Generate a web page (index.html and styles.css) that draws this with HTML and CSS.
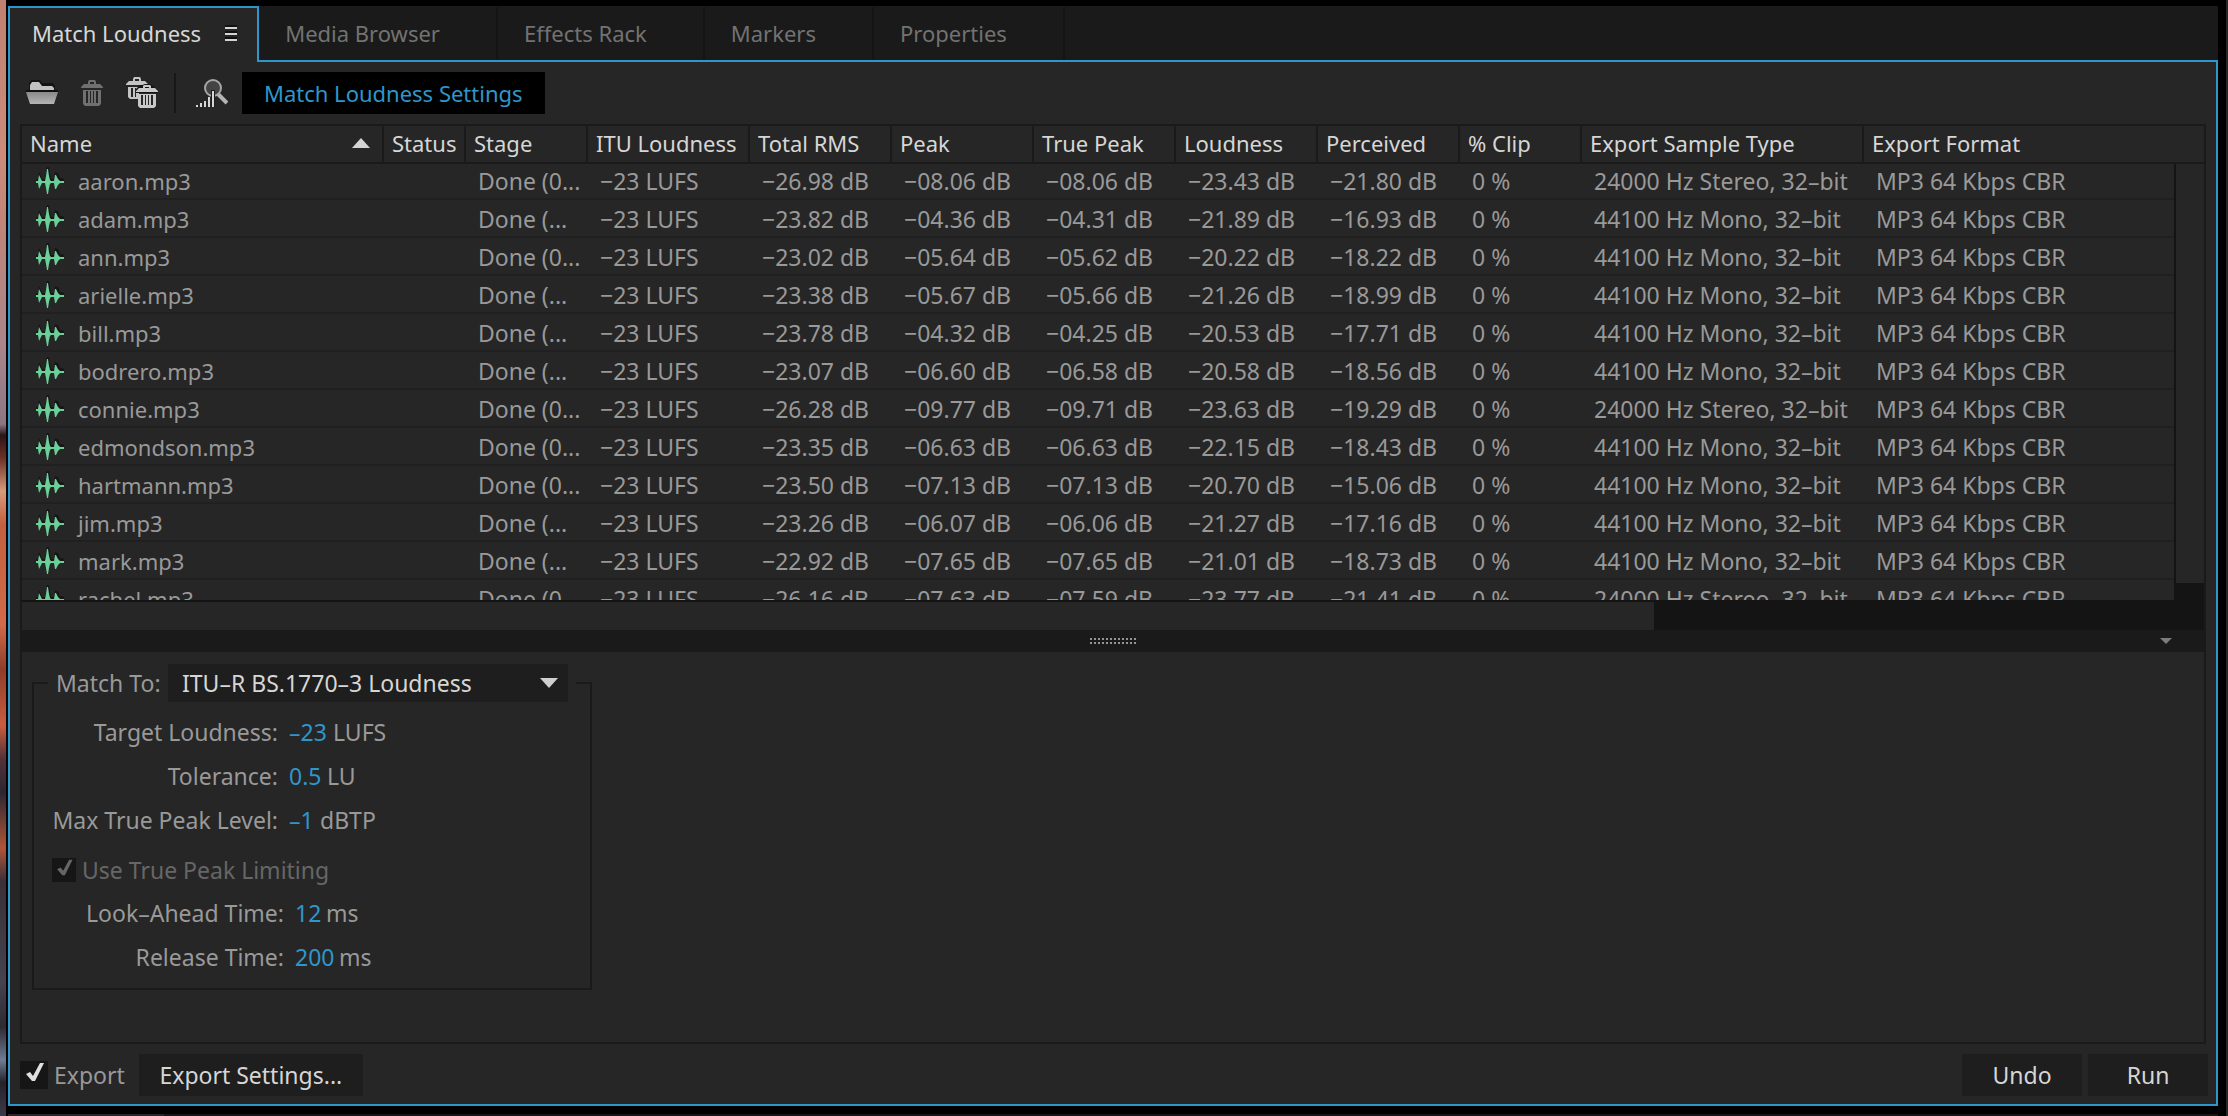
FILE: index.html
```html
<!DOCTYPE html>
<html lang="en">
<head>
<meta charset="utf-8">
<title>Match Loudness</title>
<link rel="stylesheet" href="styles.css">
</head>
<body>
<svg class="defs" width="0" height="0" aria-hidden="true">
  <defs>
    <linearGradient id="metal" x1="0" y1="0" x2="0" y2="1"><stop offset="0" stop-color="#8a8a8a"/><stop offset="1" stop-color="#b4b4b4"/></linearGradient>
    <symbol id="wave" viewBox="0 0 28 28">
      <path fill="#161616" d="M0 12h2l1-7 2 4 1 3h3l1-5 1-7 2 0 1 7 1 5h3l1-7 3 1 2 5 5 1v2H0z"/>
      <path fill="#6bcf98" d="M0 14h2l1-6 2 4 1 2h3l1-5 1-7h1l1 7 1 4 1 1h3l1-6h1l2 4 2 2h4v2h-4l-2 2-2 4h-1l-1-6h-3l-1 1-1 4-1 6h-1l-1-6-1-5H6l-1 2-2 4-1-6H0z"/>
    </symbol>
    <symbol id="bin" viewBox="0 0 22 26">
      <path fill="currentColor" fill-rule="evenodd" d="M7 4V2l1-2h6l1 2v2h4l3 3v1H0V7l3-3zM9 4h4V2H9z"/>
      <path fill="currentColor" fill-rule="evenodd" d="M2 10h18v14l-2 2H4l-2-2zM5 11v12h2V11zM9 11v12h1V11zM12 11v12h1V11zM15 11v12h2V11z"/>
    </symbol>
    <symbol id="tick" viewBox="0 0 28 28"><path fill="currentColor" d="M6 13l4-2 3 4 7-13h4l-9 18h-3z"/></symbol>
  </defs>
</svg>
<div class="wallpaper"></div>
<div class="window">
  <main class="panel">
    <nav class="tabs" aria-label="Panels">
      <button class="tab active" type="button">Match Loudness
        <svg width="12" height="16" viewBox="0 0 12 16"><path fill="#111" d="M0 0h12v2H0zM0 6h12v2H0zM0 12h12v2H0z"/><path fill="#d4d4d4" d="M0 2h12v2H0zM0 8h12v2H0zM0 14h12v2H0z"/></svg>
      </button>
      <button class="tab" type="button">Media Browser</button>
      <button class="tab" type="button">Effects Rack</button>
      <button class="tab" type="button">Markers</button>
      <button class="tab" type="button">Properties</button>
    </nav>
    <div class="content">
      <div class="toolbar">
        <button class="icon-button" type="button" aria-label="Open files">
          <svg width="32" height="26" viewBox="0 0 32 26"><path fill="#141414" d="M3 3l2-3h9l2 3h11l2 3v5H3z"/><path fill="#c2c2c2" d="M4 10V5l2-3h7l3 4h10l2 2v2z"/><path fill="#111" d="M0 10h32v2H0z"/><path fill="url(#metal)" d="M0 12h32l-4 12H4z"/></svg>
        </button>
        <button class="icon-button dim" type="button" aria-label="Remove file" disabled>
          <svg width="22" height="26"><use href="#bin"/></svg>
        </button>
        <button class="icon-button" type="button" aria-label="Remove all files">
          <svg width="32" height="32" viewBox="0 0 32 32"><path fill="#c4c4c4" fill-rule="evenodd" d="M7 4V2l1-2h6l1 2v2h4l3 3-6 1H0V7l3-3zM9 4h4V2H9zM2 10h11v12H4l-2-2zM5 11v9h2v-9zM9 11v9h1v-9z"/><path fill="#141414" d="M10 12l4-4h3l2-1h5l3 2 5 4v3H10z"/><g fill="#c8c8c8" fill-rule="evenodd"><path d="M17 11V9l1-1h6l1 1v2h4l3 3v1H10v-1l3-3zM19 11h4v-1h-4z"/><path d="M12 17h18v12l-2 2H14l-2-2zM15 18v10h2V18zM19 18v10h1V18zM22 18v10h1V18zM25 18v10h2V18z"/></g></svg>
        </button>
        <span class="divider"></span>
        <button class="icon-button scan" type="button" aria-label="Scan">
          <svg width="32" height="32" viewBox="0 0 32 32"><path d="M22 17l9 9" stroke="#b4b4b4" stroke-width="4"/><circle cx="17" cy="11" r="8" fill="#444" stroke="#a6a6a6" stroke-width="2"/><path stroke="#1b1b1b" stroke-width="4" d="M17 13v17"/><path fill="#d6d6d6" d="M0 28h2v2H0zM4 26h2v4H4zM8 24h2v6H8zM12 20h2v10h-2zM16 14h2v16h-2z"/></svg>
        </button>
        <button class="settings-toggle" type="button" aria-pressed="true">Match Loudness Settings</button>
      </div>

      <div class="frame">
        <div class="list">
          <table>
            <colgroup><col class="c-name"><col class="c-status"><col class="c-stage"><col class="c-itu"><col class="c-level"><col class="c-level"><col class="c-level"><col class="c-level"><col class="c-level"><col class="c-stage"><col class="c-sample"><col></colgroup>
            <thead>
              <tr><th><span class="sorted">Name <svg width="18" height="10" viewBox="0 0 18 10"><path fill="#d4d4d4" d="M9 0l9 10H0z"/></svg></span></th><th>Status</th><th>Stage</th><th>ITU Loudness</th><th>Total RMS</th><th>Peak</th><th>True Peak</th><th>Loudness</th><th>Perceived</th><th>% Clip</th><th>Export Sample Type</th><th>Export Format</th></tr>
            </thead>
            <tbody>
              <tr><td><span class="file"><svg width="28" height="28"><use href="#wave"/></svg>aaron.mp3</span></td><td></td><td>Done (0...</td><td>−23 LUFS</td><td>−26.98 dB</td><td>−08.06 dB</td><td>−08.06 dB</td><td>−23.43 dB</td><td>−21.80 dB</td><td>0 %</td><td>24000 Hz Stereo, 32–bit</td><td>MP3 64 Kbps CBR</td></tr>
              <tr><td><span class="file"><svg width="28" height="28"><use href="#wave"/></svg>adam.mp3</span></td><td></td><td>Done (...</td><td>−23 LUFS</td><td>−23.82 dB</td><td>−04.36 dB</td><td>−04.31 dB</td><td>−21.89 dB</td><td>−16.93 dB</td><td>0 %</td><td>44100 Hz Mono, 32–bit</td><td>MP3 64 Kbps CBR</td></tr>
              <tr><td><span class="file"><svg width="28" height="28"><use href="#wave"/></svg>ann.mp3</span></td><td></td><td>Done (0...</td><td>−23 LUFS</td><td>−23.02 dB</td><td>−05.64 dB</td><td>−05.62 dB</td><td>−20.22 dB</td><td>−18.22 dB</td><td>0 %</td><td>44100 Hz Mono, 32–bit</td><td>MP3 64 Kbps CBR</td></tr>
              <tr><td><span class="file"><svg width="28" height="28"><use href="#wave"/></svg>arielle.mp3</span></td><td></td><td>Done (...</td><td>−23 LUFS</td><td>−23.38 dB</td><td>−05.67 dB</td><td>−05.66 dB</td><td>−21.26 dB</td><td>−18.99 dB</td><td>0 %</td><td>44100 Hz Mono, 32–bit</td><td>MP3 64 Kbps CBR</td></tr>
              <tr><td><span class="file"><svg width="28" height="28"><use href="#wave"/></svg>bill.mp3</span></td><td></td><td>Done (...</td><td>−23 LUFS</td><td>−23.78 dB</td><td>−04.32 dB</td><td>−04.25 dB</td><td>−20.53 dB</td><td>−17.71 dB</td><td>0 %</td><td>44100 Hz Mono, 32–bit</td><td>MP3 64 Kbps CBR</td></tr>
              <tr><td><span class="file"><svg width="28" height="28"><use href="#wave"/></svg>bodrero.mp3</span></td><td></td><td>Done (...</td><td>−23 LUFS</td><td>−23.07 dB</td><td>−06.60 dB</td><td>−06.58 dB</td><td>−20.58 dB</td><td>−18.56 dB</td><td>0 %</td><td>44100 Hz Mono, 32–bit</td><td>MP3 64 Kbps CBR</td></tr>
              <tr><td><span class="file"><svg width="28" height="28"><use href="#wave"/></svg>connie.mp3</span></td><td></td><td>Done (0...</td><td>−23 LUFS</td><td>−26.28 dB</td><td>−09.77 dB</td><td>−09.71 dB</td><td>−23.63 dB</td><td>−19.29 dB</td><td>0 %</td><td>24000 Hz Stereo, 32–bit</td><td>MP3 64 Kbps CBR</td></tr>
              <tr><td><span class="file"><svg width="28" height="28"><use href="#wave"/></svg>edmondson.mp3</span></td><td></td><td>Done (0...</td><td>−23 LUFS</td><td>−23.35 dB</td><td>−06.63 dB</td><td>−06.63 dB</td><td>−22.15 dB</td><td>−18.43 dB</td><td>0 %</td><td>44100 Hz Mono, 32–bit</td><td>MP3 64 Kbps CBR</td></tr>
              <tr><td><span class="file"><svg width="28" height="28"><use href="#wave"/></svg>hartmann.mp3</span></td><td></td><td>Done (0...</td><td>−23 LUFS</td><td>−23.50 dB</td><td>−07.13 dB</td><td>−07.13 dB</td><td>−20.70 dB</td><td>−15.06 dB</td><td>0 %</td><td>44100 Hz Mono, 32–bit</td><td>MP3 64 Kbps CBR</td></tr>
              <tr><td><span class="file"><svg width="28" height="28"><use href="#wave"/></svg>jim.mp3</span></td><td></td><td>Done (...</td><td>−23 LUFS</td><td>−23.26 dB</td><td>−06.07 dB</td><td>−06.06 dB</td><td>−21.27 dB</td><td>−17.16 dB</td><td>0 %</td><td>44100 Hz Mono, 32–bit</td><td>MP3 64 Kbps CBR</td></tr>
              <tr><td><span class="file"><svg width="28" height="28"><use href="#wave"/></svg>mark.mp3</span></td><td></td><td>Done (...</td><td>−23 LUFS</td><td>−22.92 dB</td><td>−07.65 dB</td><td>−07.65 dB</td><td>−21.01 dB</td><td>−18.73 dB</td><td>0 %</td><td>44100 Hz Mono, 32–bit</td><td>MP3 64 Kbps CBR</td></tr>
              <tr><td><span class="file"><svg width="28" height="28"><use href="#wave"/></svg>rachel.mp3</span></td><td></td><td>Done (0...</td><td>−23 LUFS</td><td>−26.16 dB</td><td>−07.63 dB</td><td>−07.59 dB</td><td>−23.77 dB</td><td>−21.41 dB</td><td>0 %</td><td>24000 Hz Stereo, 32–bit</td><td>MP3 64 Kbps CBR</td></tr>
            </tbody>
          </table>
          <div class="vscroll"><div class="vthumb"></div></div>
        </div>
        <div class="hscroll"><div class="hthumb"></div></div>
        <div class="splitter">
          <svg class="grip" width="46" height="6" viewBox="0 0 46 6"><path stroke="#949494" stroke-width="2" stroke-dasharray="2 2" d="M0 1h46M0 5h46"/></svg>
          <svg class="collapse" width="12" height="6" viewBox="0 0 12 6"><path fill="#7c7c7c" d="M0 0h12L6 6z"/></svg>
        </div>
        <section class="settings">
          <fieldset>
            <legend>
              <span class="match">
                <label for="match-to">Match To:</label>
                <span class="select">
                  <select id="match-to"><option>ITU–R BS.1770–3 Loudness</option></select>
                  <svg width="18" height="10" viewBox="0 0 18 10"><path fill="#d0d0d0" d="M0 0h18L9 10z"/></svg>
                </span>
              </span>
            </legend>
            <div class="field"><label for="target">Target Loudness:</label><input class="w3" id="target" value="–23"><span>LUFS</span></div>
            <div class="field"><label for="tolerance">Tolerance:</label><input class="w2" id="tolerance" value="0.5"><span>LU</span></div>
            <div class="field"><label for="peak">Max True Peak Level:</label><input class="w1" id="peak" value="–1"><span>dBTP</span></div>
            <div class="limit"><span class="check small"><input type="checkbox" id="limit" checked disabled><svg width="24" height="24"><use href="#tick"/></svg></span><label for="limit">Use True Peak Limiting</label></div>
            <div class="field wide"><label for="ahead">Look–Ahead Time:</label><input class="w1" id="ahead" value="12"><span>ms</span></div>
            <div class="field wide"><label for="release">Release Time:</label><input class="w3" id="release" value="200"><span>ms</span></div>
          </fieldset>
        </section>
      </div>

      <footer>
        <span class="check"><input type="checkbox" id="export" checked><svg width="28" height="28"><use href="#tick"/></svg></span>
        <label for="export">Export</label>
        <button class="button export" type="button">Export Settings...</button>
        <button class="button" type="button">Undo</button>
        <button class="button" type="button">Run</button>
      </footer>
    </div>
  </main>
  <div class="below"><span></span></div>
</div>
<div class="beside"></div>
</body>
</html>
```
FILE: styles.css
```css
* { box-sizing: border-box; }

body {
  margin: 0;
  min-height: 100vh;
  height: 100vh;
  display: flex;
  background: #000;
  color: #999;
  font: 23px/38px "Noto Sans", "Open Sans", sans-serif;
}

button, input, select {
  font: inherit;
  color: inherit;
  border: 0;
  border-radius: 0;
  margin: 0;
  padding: 0;
  background: none;
  appearance: none;
}

svg { display: block; flex: none; }
.defs { position: absolute; }

.wallpaper {
  width: 6px;
  margin-right: 2px;
  background: linear-gradient(#c08070 0, #cd8c7a 14%, #c08478 20%, #a9858c 31%, #8c7683 38%, #2a1618 39%, #6b3024 41%, #d89a7c 44%, #c4603f 47%, #d06a48 56%, #8f3d2a 60%, #c85d3e 65%, #54313a 68%, #2c2731 71%, #b05438 76%, #3a3038 79%, #44434f 88%, #2e2a33 92%, #6f7c94 95%, #26222b 97%, #3b3b48 100%);
}
.window { flex: 1; min-width: 0; display: flex; flex-direction: column; padding-top: 6px; }
.beside { width: 2px; margin-left: 8px; background: #262626; }
.below { height: 2px; margin-top: 8px; background: #161616; }
.below span { display: block; width: 156px; height: 2px; background: #262626; }

.panel { flex: 1; min-height: 0; display: flex; flex-direction: column; }

.tabs { display: flex; height: 54px; background: #1a1a1a; }
.tab {
  padding: 0 56px 2px 26px;
  border-right: 2px solid #141414;
  border-top: 2px solid #1a1a1a;
  font-size: 22px;
  color: #727272;
}
.tab.active {
  position: relative;
  display: flex;
  align-items: center;
  gap: 24px;
  margin-bottom: -2px;
  padding: 0 20px 4px 22px;
  border: 2px solid #2e96cb;
  border-bottom: 0;
  background: #262626;
  color: #d6d6d6;
}

.content {
  flex: 1;
  min-height: 0;
  display: flex;
  flex-direction: column;
  border: 2px solid #2e96cb;
  background: #262626;
}

.toolbar { display: flex; align-items: center; gap: 1px; height: 62px; padding-left: 5px; }
.icon-button { padding: 0 11px; color: #c4c4c4; }
.icon-button.dim { color: #707070; }
.icon-button.scan { margin-left: 8px; }
.divider { width: 2px; height: 40px; margin-left: 4px; background: #171717; }
.settings-toggle { height: 42px; margin-left: 2px; padding: 0 22px; font-size: 22px; background: #000; color: #2e96cb; }

.frame {
  flex: 1;
  min-height: 0;
  display: flex;
  flex-direction: column;
  margin: 0 10px;
  border: 2px solid #1a1a1a;
}

.list { position: relative; flex: 1; min-height: 0; overflow: hidden; border-bottom: 2px solid #141414; }
table { width: 100%; table-layout: fixed; border-collapse: separate; border-spacing: 0; white-space: nowrap; }
.c-name { width: 362px; }
.c-status { width: 82px; }
.c-stage { width: 122px; }
.c-itu { width: 162px; }
.c-level { width: 142px; }
.c-sample { width: 282px; }
th {
  height: 36px;
  padding: 0 0 2px 8px;
  border-right: 2px solid #1a1a1a;
  font-weight: 400;
  font-size: 22px;
  line-height: 34px;
  text-align: left;
  color: #d6d6d6;
}
th:last-child { border-right: 0; }
.sorted { display: flex; align-items: center; justify-content: space-between; padding-right: 12px; }
td {
  height: 38px;
  padding: 0 0 0 12px;
  border-top: 2px solid transparent;
  border-bottom: 2px solid #202020;
  line-height: 34px;
}
tbody tr:first-child td { border-top-color: #1a1a1a; }
.file { display: flex; align-items: center; gap: 14px; height: 34px; padding-left: 2px; font-size: 22px; }

.vscroll { position: absolute; top: 38px; right: 0; bottom: 0; width: 30px; padding-left: 2px; background: #141414; }
.vthumb { height: 96%; background: #262626; }
.hscroll { height: 28px; background: #141414; }
.hthumb { width: 1632px; max-width: 75%; height: 28px; background: #262626; }

.splitter { display: flex; align-items: center; height: 22px; padding: 0 32px; background: #1a1a1a; }
.grip { margin: 0 auto; padding: 0; }
.splitter::before { content: ""; width: 12px; }

.settings { padding: 12px 10px 52px; }
fieldset { width: 560px; min-width: 0; margin: 0; padding: 8px 14px 9px; border: 2px solid #1a1a1a; }
legend { width: 528px; padding: 0 8px; }
.match { display: flex; align-items: center; justify-content: space-between; }
.select { position: relative; width: 400px; }
.select select { display: block; width: 100%; height: 38px; padding: 0 40px 0 14px; background: #1e1e1e; color: #d6d6d6; }
.select svg { position: absolute; right: 10px; top: 14px; pointer-events: none; }

.field { display: flex; align-items: center; height: 44px; }
.field label { width: 230px; margin-right: 11px; text-align: right; }
.field.wide label { width: 236px; }
.field input { color: #2e96cb; margin-right: 4px; }
.w1 { width: 27px; }
.w2 { width: 34px; }
.w3 { width: 40px; }

.limit { display: flex; align-items: center; gap: 6px; height: 28px; margin: 14px 0 7px 4px; color: #666; }
.check { position: relative; color: #e0e0e0; }
.check input { display: block; width: 28px; height: 28px; background: #161616; }
.check.small { color: #666; }
.check.small input { width: 24px; height: 24px; }
.check svg { position: absolute; inset: 0; pointer-events: none; }

footer { display: flex; align-items: center; gap: 6px; padding: 10px 8px 8px 10px; }
.button { min-width: 120px; height: 42px; background: #1e1e1e; color: #d6d6d6; }
.button.export { width: 224px; margin: 0 auto 0 8px; }
```
